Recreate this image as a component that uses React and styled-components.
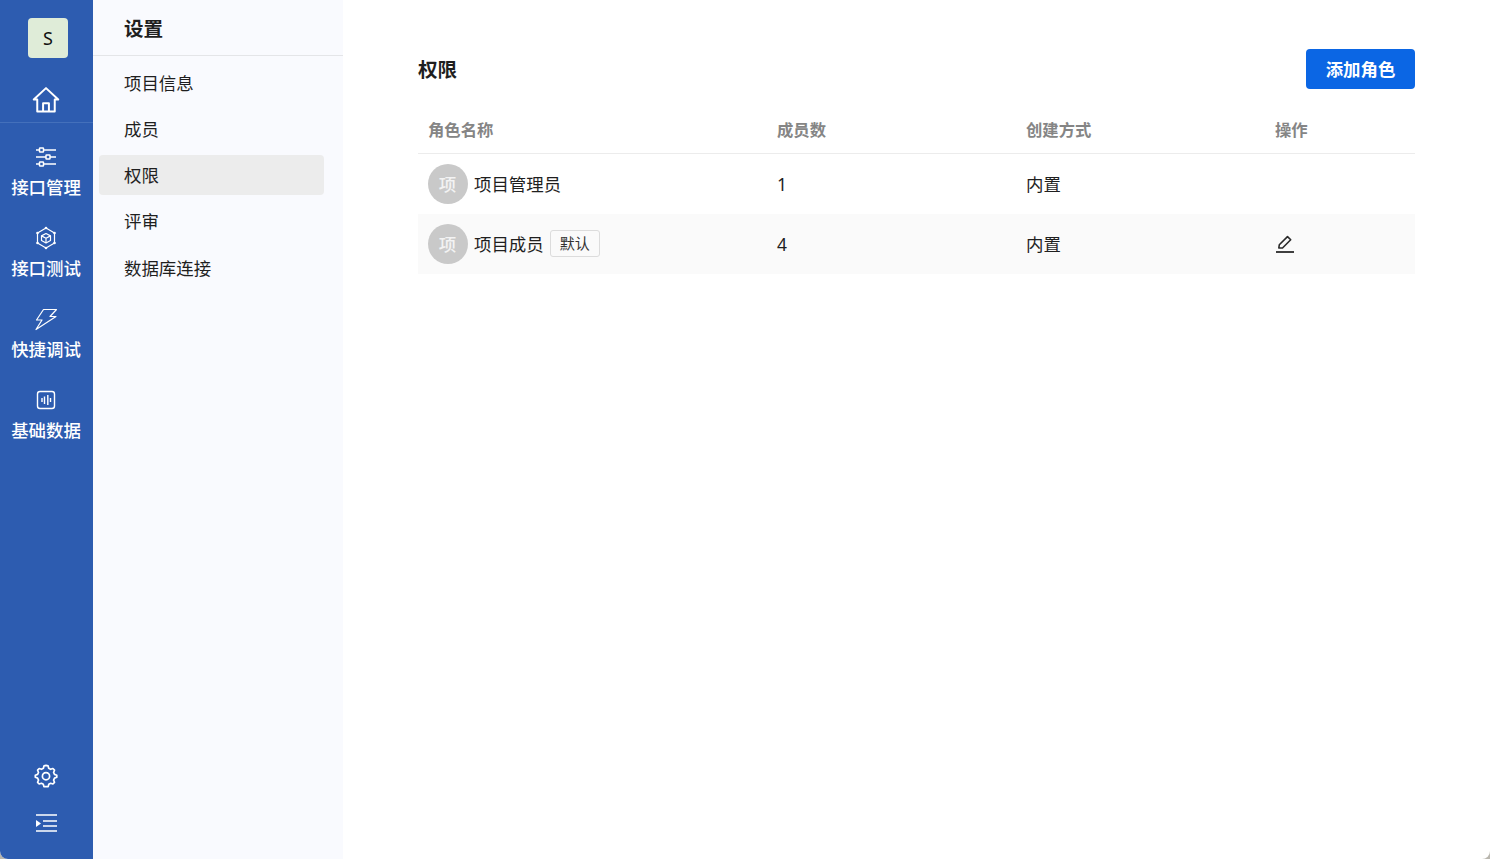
import React from "react";
import styled, { createGlobalStyle } from "styled-components";

const Global = createGlobalStyle`
  html, body { margin: 0; padding: 0; height: 100%; background: #b9b6ae; }
  #root { height: 100%; }
  * { box-sizing: border-box; }
  body { font-family: "Noto Sans", "Noto Sans CJK SC", sans-serif; color: #1f1f1f; }
`;

const Shell = styled.div`
  display: flex;
  width: 1490px;
  height: 859px;
  overflow: hidden;
  background: #fff;
  border-radius: 0 0 8px 8px;
`;
const Rail = styled.nav`
  width: 93px;
  flex: none;
  display: flex;
  flex-direction: column;
  align-items: stretch;
  background: #2d5cb0;
  color: #fff;
`;
const RailTop = styled.div`
  height: 123px;
  flex: none;
  display: flex;
  flex-direction: column;
  align-items: center;
  padding: 18px 0 0;
  border-bottom: 1px solid #4470bb;
`;
const Logo = styled.div`
  width: 40px;
  height: 40px;
  margin-left: 3px;
  border-radius: 4px;
  background: #dfecd8;
  color: #111;
  font-size: 18px;
  display: flex;
  align-items: center;
  justify-content: center;
`;
const HomeBtn = styled.div`
  margin-top: 28px;
  margin-right: 1px;
  width: 28px;
  height: 28px;
  display: flex;
  align-items: center;
  justify-content: center;
`;
const RailNav = styled.div`
  flex: 1;
  display: flex;
  flex-direction: column;
  padding: 20px 1px 0 0;
`;
const RailItem = styled.div`
  height: 81px;
  display: flex;
  flex-direction: column;
  align-items: center;
`;
const RailIcon = styled.div`
  width: 28px;
  height: 28px;
  display: flex;
  align-items: center;
  justify-content: center;
`;
const RailLabel = styled.span`
  font-size: 17.44px;
  font-weight: 500;
  line-height: 24px;
  margin-top: 4px;
  white-space: nowrap;
`;
const RailBottom = styled.div`
  display: flex;
  flex-direction: column;
  align-items: center;
  gap: 26px;
  padding: 0 1px 27px 0;
`;
const Side = styled.aside`
  width: 250px;
  flex: none;
  background: #f9fafe;
`;
const SideHead = styled.div`
  height: 56px;
  padding: 0 0 1px 31px;
  display: flex;
  align-items: center;
  border-bottom: 1px solid #e4e5e8;
  font-size: 19.6px;
  font-weight: 700;
`;
const SideList = styled.div`
  display: flex;
  flex-direction: column;
  gap: 6.25px;
  padding: 6px 19px 0 6px;
`;
const SideItem = styled.div`
  height: 40px;
  display: flex;
  align-items: center;
  padding-left: 25px;
  font-size: 17.44px;
  border-radius: 4px;
  background: ${(p) => (p.$active ? "#ececec" : "transparent")};
`;
const Main = styled.main`
  flex: 1;
  padding: 49px 75px 0;
  min-width: 0;
`;
const TitleRow = styled.div`
  display: flex;
  align-items: center;
  justify-content: space-between;
  height: 40px;
`;
const Title = styled.h1`
  margin: 0 0 2px;
  font-size: 19.6px;
  font-weight: 700;
`;
const AddButton = styled.button`
  width: 109px;
  height: 40px;
  border: 0;
  border-radius: 4px;
  background: #0b66e4;
  color: #fff;
  font: 700 17.44px "Noto Sans", "Noto Sans CJK SC", sans-serif;
  padding: 0 0 2px;
`;
const Table = styled.div`
  margin-top: 21px;
`;
const HeadRow = styled.div`
  display: grid;
  grid-template-columns: 349px 249px 249px 1fr;
  height: 44px;
  padding-bottom: 6px;
  align-items: center;
  border-bottom: 1px solid #ececec;
`;
const HeadCell = styled.div`
  padding-left: 10px;
  font-size: 16.35px;
  font-weight: 700;
  color: #858585;
`;
const Row = styled.div`
  display: grid;
  grid-template-columns: 349px 249px 249px 1fr;
  height: 60px;
  align-items: center;
  background: ${(p) => (p.$alt ? "#fafafa" : "#fff")};
`;
const Cell = styled.div`
  padding-left: 10px;
  font-size: 17.44px;
  display: flex;
  align-items: center;
`;
const CellText = styled.span`
  padding-bottom: 2px;
`;
const Avatar = styled.div`
  width: 40px;
  height: 40px;
  border-radius: 50%;
  background: #c9c9c9;
  color: #f3f3f3;
  font-size: 17.44px;
  font-weight: 500;
  display: flex;
  align-items: center;
  justify-content: center;
  padding: 0 1px 2px 0;
  margin-right: 6px;
  flex: none;
`;
const Tag = styled.span`
  margin: 0 0 1px 6px;
  width: 50px;
  height: 27px;
  border: 1px solid #dcdcdc;
  border-radius: 3px;
  background: #fafafa;
  color: #333;
  font-size: 15px;
  display: flex;
  align-items: center;
  justify-content: center;
  padding: 0 0 2px;
`;

const Stroke = ({ size = 24, sw = 1.6, children }) => (
  <svg width={size} height={size} viewBox="0 0 24 24" fill="none" stroke="currentColor" strokeWidth={sw} strokeLinejoin="round">
    {children}
  </svg>
);
const HomeIcon = () => (
  <Stroke size={28} sw={1.7}>
    <path d="M1.5 11.6 12 1.8l10.500 9.800H19.500V21.800H4.500V11.600Z" />
    <path d="M9.500 21.800V14.800h5v7" />
  </Stroke>
);
const SlidersIcon = () => (
  <Stroke size={24} sw={1.5}>
    <path d="M2 5h3.500M9.500 5H22M2 12h10M16 12h6M2 19h3.500M9.500 19H22" />
    <rect x="5.500" y="3" width="4" height="4" rx=".6" />
    <rect x="12" y="10" width="4" height="4" rx=".6" />
    <rect x="5.500" y="17" width="4" height="4" rx=".6" />
  </Stroke>
);
const CubeIcon = () => (
  <Stroke size={24} sw={1.2}>
    <path d="M12 2 20.500 7v10L12 22l-8.500-5V7Z" />
    <path d="M12 7.500l4.500 2.400v4.600L12 17l-4.500-2.500V9.900Z" />
    <path d="M7.500 9.900l4.500 2.400 4.500-2.400M12 12.300V17" />
    <g fill="#fff" stroke="none">
      <circle cx="12" cy="2" r="1.300" />
      <circle cx="20.500" cy="7" r="1.300" />
      <circle cx="20.500" cy="17" r="1.300" />
      <circle cx="12" cy="22" r="1.300" />
      <circle cx="3.500" cy="17" r="1.300" />
      <circle cx="3.500" cy="7" r="1.300" />
    </g>
  </Stroke>
);
const BoltIcon = () => (
  <Stroke size={24} sw={1.2}>
    <path d="M9.500 2.500H22.500L16 9.500H22L2 22.500 8 13H2.500Z" />
  </Stroke>
);
const WaveIcon = () => (
  <Stroke size={24} sw={1.4}>
    <rect x="3.500" y="3.500" width="17" height="17" rx="2.500" />
    <path d="M8 10v4M10.500 8.500v7.500M13.800 7v10M16.500 10v4" />
  </Stroke>
);
const GearIcon = () => (
  <Stroke size={24} sw={1.7}>
    <path d="M12 1.400l2.100.5.6 2.400 1.900 1 2.300-.8 1.600 1.700-.9 2.300.9 1.900 2.300.8v2.100l-2.300.8-.9 2 .9 2.200-1.600 1.700-2.200-.7-1.900 1-.6 2.300H9.900l-.6-2.300-1.900-1-2.200.7-1.600-1.700.9-2.200-.9-2-2.300-.8v-2.100l2.300-.8.9-1.900-.9-2.300 1.600-1.700 2.300.8 1.900-1 .6-2.400Z" />
    <circle cx="12" cy="12.200" r="3.600" />
  </Stroke>
);
const IndentIcon = () => (
  <svg width="21" height="18" viewBox="0 0 21 18" fill="none">
    <path d="M0 1h21M7 7h14M7 12h14M0 17h21" stroke="#fff" strokeWidth="1.6" />
    <path d="M0 6v7l5-3.500Z" fill="#fff" />
  </svg>
);
const EditIcon = () => (
  <svg width="20" height="20" viewBox="0 0 20 20" fill="none" stroke="#2a2a2a" strokeLinejoin="round">
    <path d="M3.800 14 4.300 10.800 12.500 2.600l3.200 3.200-8.200 8.200Z" strokeWidth="1.6" />
    <path d="M1 18h18" strokeWidth="1.8" />
  </svg>
);

const railItems = [
  ["接口管理", <SlidersIcon />],
  ["接口测试", <CubeIcon />],
  ["快捷调试", <BoltIcon />],
  ["基础数据", <WaveIcon />],
];
const sideItems = ["项目信息", "成员", "权限", "评审", "数据库连接"];

export default function App() {
  return (
    <Shell>
      <Global />
      <Rail>
        <RailTop>
          <Logo>S</Logo>
          <HomeBtn><HomeIcon /></HomeBtn>
        </RailTop>
        <RailNav>
          {railItems.map(([label, icon]) => (
            <RailItem key={label}>
              <RailIcon>{icon}</RailIcon>
              <RailLabel>{label}</RailLabel>
            </RailItem>
          ))}
        </RailNav>
        <RailBottom>
          <GearIcon />
          <IndentIcon />
        </RailBottom>
      </Rail>
      <Side>
        <SideHead>设置</SideHead>
        <SideList>
          {sideItems.map((s) => (
            <SideItem key={s} $active={s === "权限"}>{s}</SideItem>
          ))}
        </SideList>
      </Side>
      <Main>
        <TitleRow>
          <Title>权限</Title>
          <AddButton>添加角色</AddButton>
        </TitleRow>
        <Table>
          <HeadRow>
            <HeadCell>角色名称</HeadCell>
            <HeadCell>成员数</HeadCell>
            <HeadCell>创建方式</HeadCell>
            <HeadCell>操作</HeadCell>
          </HeadRow>
          <Row>
            <Cell><Avatar>项</Avatar><CellText>项目管理员</CellText></Cell>
            <Cell>1</Cell>
            <Cell><CellText>内置</CellText></Cell>
            <Cell />
          </Row>
          <Row $alt>
            <Cell><Avatar>项</Avatar><CellText>项目成员</CellText><Tag>默认</Tag></Cell>
            <Cell>4</Cell>
            <Cell><CellText>内置</CellText></Cell>
            <Cell><EditIcon /></Cell>
          </Row>
        </Table>
      </Main>
    </Shell>
  );
}
